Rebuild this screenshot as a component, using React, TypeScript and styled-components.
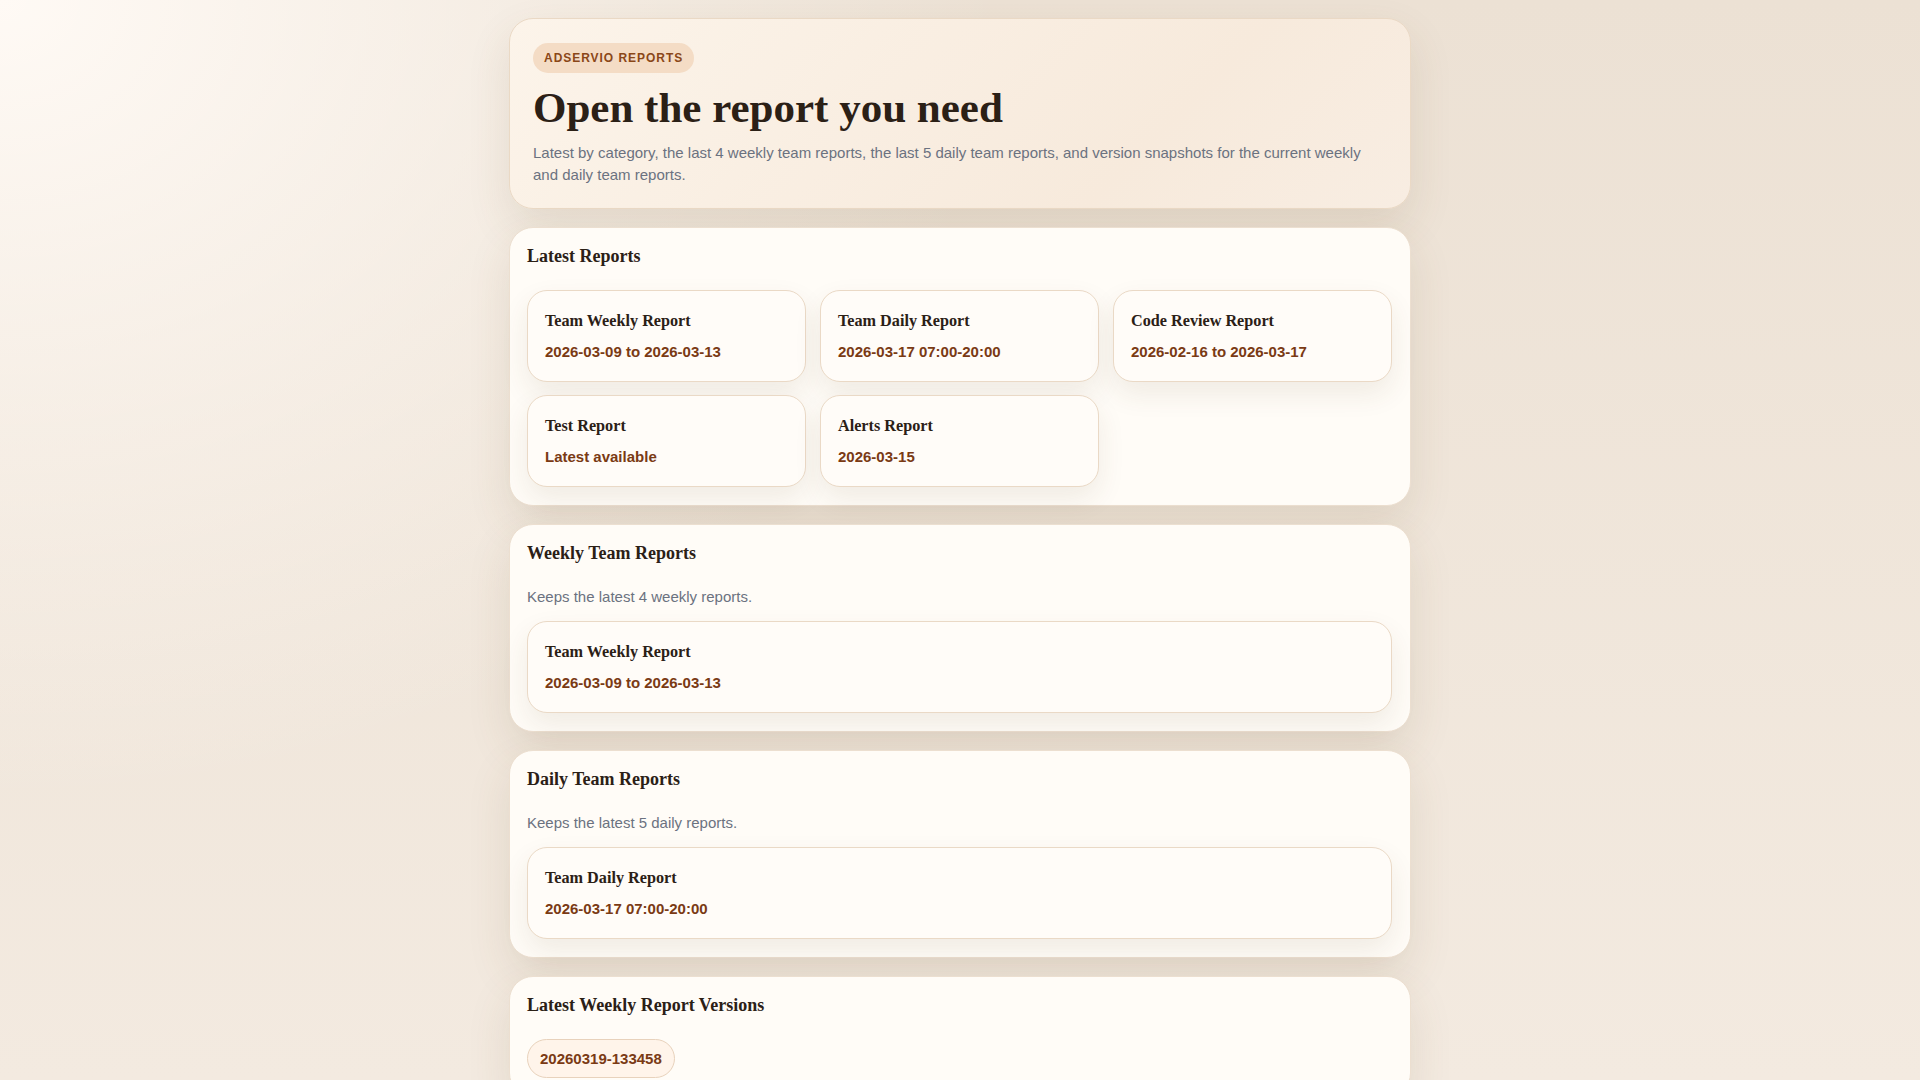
import styled, { createGlobalStyle } from 'styled-components';

type Report = { title: string; range: string };

const latest: Report[] = [
  { title: 'Team Weekly Report', range: '2026-03-09 to 2026-03-13' },
  { title: 'Team Daily Report', range: '2026-03-17 07:00-20:00' },
  { title: 'Code Review Report', range: '2026-02-16 to 2026-03-17' },
  { title: 'Test Report', range: 'Latest available' },
  { title: 'Alerts Report', range: '2026-03-15' },
];

const App = () => {
  return (
    <>
      <GlobalStyle />
      <Page>
        <Hero>
          <Badge>Adservio Reports</Badge>
          <Title>Open the report you need</Title>
          <Lead>
            Latest by category, the last 4 weekly team reports, the last 5 daily team reports, and
            version snapshots for the current weekly and daily team reports.
          </Lead>
        </Hero>

        <Section>
          <SectionTitle>Latest Reports</SectionTitle>
          <ReportGrid $columns={3}>
            {latest.map((r) => (
              <ReportCard key={r.title} href='#'>
                <CardTitle>{r.title}</CardTitle>
                <CardMeta>{r.range}</CardMeta>
              </ReportCard>
            ))}
          </ReportGrid>
        </Section>

        <Section>
          <SectionTitle>Weekly Team Reports</SectionTitle>
          <Note>Keeps the latest 4 weekly reports.</Note>
          <ReportGrid $columns={1}>
            <ReportCard href='#'>
              <CardTitle>Team Weekly Report</CardTitle>
              <CardMeta>2026-03-09 to 2026-03-13</CardMeta>
            </ReportCard>
          </ReportGrid>
        </Section>

        <Section>
          <SectionTitle>Daily Team Reports</SectionTitle>
          <Note>Keeps the latest 5 daily reports.</Note>
          <ReportGrid $columns={1}>
            <ReportCard href='#'>
              <CardTitle>Team Daily Report</CardTitle>
              <CardMeta>2026-03-17 07:00-20:00</CardMeta>
            </ReportCard>
          </ReportGrid>
        </Section>

        <Section>
          <SectionTitle>Latest Weekly Report Versions</SectionTitle>
          <PillRow>
            <Pill href='#'>20260319-133458</Pill>
          </PillRow>
        </Section>
      </Page>
    </>
  );
};

export default App;

const GlobalStyle = createGlobalStyle`
  * { box-sizing: border-box; }
  html, body { margin: 0; }
  body {
    min-height: 100vh;
    font-family: "Liberation Sans", Arial, sans-serif;
    color: #2b2016;
    background:
      radial-gradient(ellipse 1000px 800px at 0 0, rgba(255, 250, 245, 1) 0%, rgba(255, 250, 245, 0.55) 45%, rgba(255, 250, 245, 0) 100%),
      linear-gradient(180deg, #ece1d4 0%, #f3eae0 100%);
    background-attachment: fixed;
  }
`;

const Page = styled.main`
  width: 902px;
  margin: 0 auto;
  padding: 18px 0 40px;
  display: flex;
  flex-direction: column;
  gap: 18px;
`;

const Hero = styled.header`
  padding: 24px 24px 22px 23px;
  border: 1px solid #ead9c5;
  border-radius: 24px;
  background: linear-gradient(135deg, #fcf4ea 0%, #f7eadc 70%, #f8ede2 100%);
  box-shadow: 0 18px 44px rgba(110, 80, 45, 0.12);
`;

const Badge = styled.span`
  display: inline-block;
  padding: 8px 11px;
  border-radius: 999px;
  background: #f4dcc5;
  color: #8a4718;
  font-size: 12px;
  font-weight: 700;
  letter-spacing: 0.08em;
  text-transform: uppercase;
`;

const Title = styled.h1`
  margin: 11px 0 0;
  font-family: "Liberation Serif", "Times New Roman", serif;
  font-size: 43px;
  line-height: 1.1;
  font-weight: 700;
  color: #2b2016;
`;

const Lead = styled.p`
  margin: 11px 0 0;
  font-size: 15px;
  line-height: 22px;
  color: #6b7280;
`;

const Section = styled.section`
  padding: 18px 18px 18px 17px;
  border: 1px solid #ecdfd0;
  border-radius: 24px;
  background: #fffcf7;
  box-shadow: 0 18px 44px rgba(110, 80, 45, 0.12);
`;

const SectionTitle = styled.h2`
  margin: 0 0 23px;
  font-family: "Liberation Serif", "Times New Roman", serif;
  font-size: 18px;
  line-height: 21px;
  font-weight: 700;
  color: #2b2016;
`;

const Note = styled.p`
  margin: -1px 0 13px;
  font-size: 15px;
  line-height: 22px;
  color: #6b7280;
`;

const ReportGrid = styled.div<{ $columns: number }>`
  display: grid;
  grid-template-columns: repeat(${(p) => p.$columns}, minmax(0, 1fr));
  gap: 13px 14px;
`;

const ReportCard = styled.a`
  display: flex;
  flex-direction: column;
  gap: 13px;
  padding: 21px 17px;
  border: 1px solid #ead9c6;
  border-radius: 20px;
  background: #fffcf8;
  box-shadow: 0 12px 28px rgba(90, 65, 35, 0.09);
  text-decoration: none;
`;

const CardTitle = styled.strong`
  font-family: "Liberation Serif", "Times New Roman", serif;
  font-size: 16.2px;
  line-height: 18px;
  font-weight: 700;
  color: #2b2016;
`;

const CardMeta = styled.span`
  font-size: 15px;
  line-height: 17px;
  font-weight: 700;
  color: #7a3a14;
`;

const PillRow = styled.div`
  display: flex;
  flex-wrap: wrap;
  gap: 10px;
`;

const Pill = styled.a`
  display: inline-block;
  padding: 10px 12px;
  border: 1px solid #e8d2bc;
  border-radius: 999px;
  background: #fff4ea;
  color: #7a3a14;
  font-size: 15px;
  line-height: 17px;
  font-weight: 700;
  text-decoration: none;
`;
